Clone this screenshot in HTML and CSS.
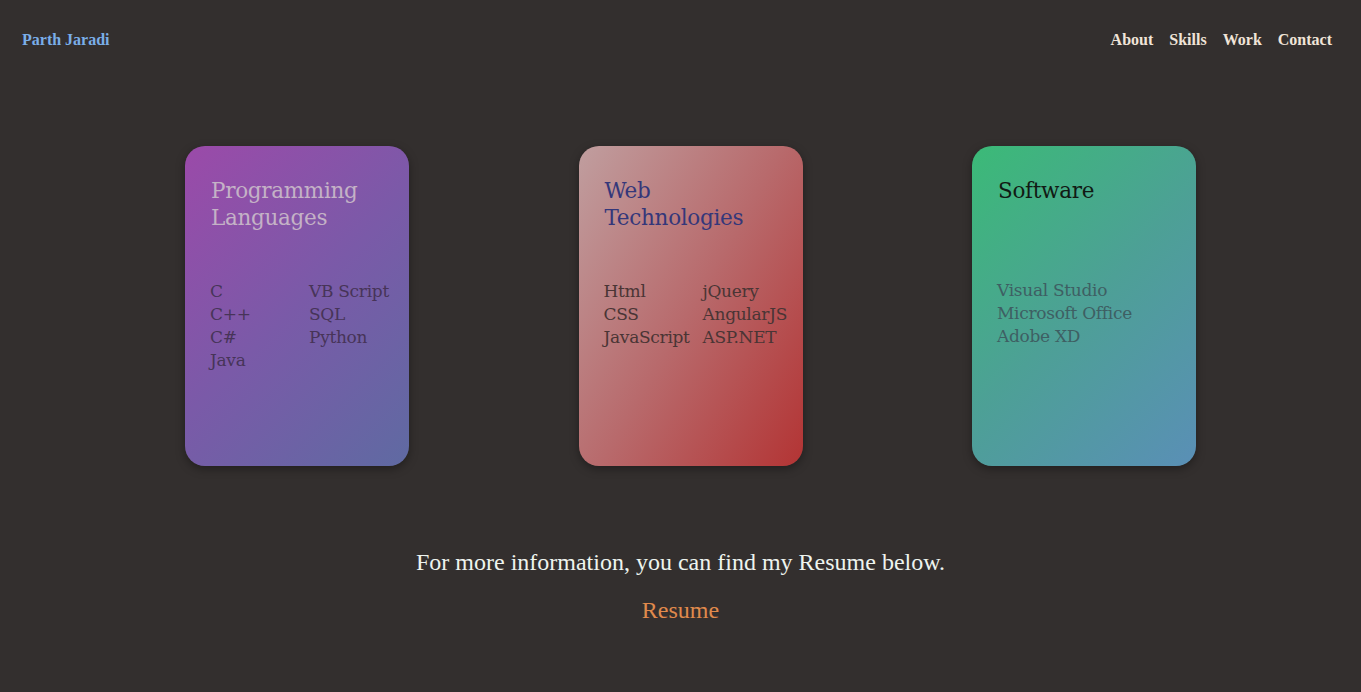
FILE: index.html
```html
<!DOCTYPE html>
<html>
<head>
<meta charset="utf-8">
<link rel="stylesheet" href="styles.css">
</head>
<body>
<header class="header">
  <a class="brand" href="#">Parth Jaradi</a>
  <nav class="nav">
    <a href="#">About</a>
    <a href="#">Skills</a>
    <a href="#">Work</a>
    <a href="#">Contact</a>
  </nav>
</header>
<main>
  <section class="cards">
    <div class="card card-prog">
      <h2 class="card-title">Programming<br>Languages</h2>
      <div class="list two-col">
        <ul>
          <li>C</li><li>C++</li><li>C#</li><li>Java</li>
        </ul>
        <ul>
          <li>VB Script</li><li>SQL</li><li>Python</li>
        </ul>
      </div>
    </div>
    <div class="card card-web">
      <h2 class="card-title">Web<br>Technologies</h2>
      <div class="list two-col">
        <ul>
          <li>Html</li><li>CSS</li><li>JavaScript</li>
        </ul>
        <ul>
          <li>jQuery</li><li>AngularJS</li><li>ASP.NET</li>
        </ul>
      </div>
    </div>
    <div class="card card-soft">
      <h2 class="card-title">Software</h2>
      <div class="list one-col">
        <ul>
          <li>Visual Studio</li><li>Microsoft Office</li><li>Adobe XD</li>
        </ul>
      </div>
    </div>
  </section>
  <section class="info">
    <p class="info-text">For more information, you can find my Resume below.</p>
    <a class="resume" href="#">Resume</a>
  </section>
</main>
</body>
</html>
```
FILE: styles.css
```css
html, body {
  margin: 0;
  padding: 0;
}
body {
  background: #332f2e;
  font-family: "Liberation Serif", "Times New Roman", serif;
  height: 692px;
  overflow: hidden;
}
a { text-decoration: none; }

.header {
  display: flex;
  justify-content: space-between;
  align-items: center;
  height: 80px;
  padding: 0 29px 0 22px;
}
.brand {
  color: #7aaee8;
  font-weight: bold;
  font-size: 16px;
}
.nav {
  display: flex;
  gap: 16px;
}
.nav a {
  color: #f0e4d8;
  font-weight: bold;
  font-size: 16px;
}

.cards {
  display: flex;
  justify-content: space-between;
  padding: 66px 165px 0 185px;
}
.card {
  width: 224px;
  height: 320px;
  border-radius: 20px;
  box-sizing: border-box;
  padding: 31px 0 0 26px;
  box-shadow: 0 3px 10px rgba(0,0,0,0.35);
  font-family: "DejaVu Serif", Georgia, serif;
}
.card-title {
  margin: 0;
  font-weight: normal;
  font-size: 21.5px;
  line-height: 27px;
  letter-spacing: -0.3px;
}
.list {
  display: flex;
  margin-top: 49px;
  margin-left: -1px;
}
.list ul {
  list-style: none;
  margin: 0;
  padding: 0;
  width: 99px;
  flex-shrink: 0;
}
.list li {
  font-size: 17px;
  line-height: 23px;
  letter-spacing: -0.3px;
  white-space: nowrap;
}
.one-col { margin-top: 75px; }
.one-col ul { width: auto; }

.card-prog {
  background: linear-gradient(135deg, #9b4aa9 0%, #7a5aa8 50%, #5f6aa2 100%);
}
.card-prog .card-title { color: #c4b2c6; }
.card-prog li { color: #473458; }

.card-web {
  background: linear-gradient(120deg, #c09e9f 0%, #b86a6c 50%, #b33434 100%);
}
.card-web .card-title { color: #34377a; }
.card-web li { color: #4a3535; }

.card-soft {
  background: linear-gradient(135deg, #3bba77 0%, #4da096 50%, #5a8fb6 100%);
}
.card-soft .card-title { color: #111a14; }
.card-soft li { color: #3e5f63; }

.info {
  display: flex;
  flex-direction: column;
  align-items: center;
  padding-top: 82px;
}
.info-text {
  margin: 0;
  color: #eef4ee;
  font-size: 24px;
  line-height: 28px;
}
.resume {
  margin-top: 20px;
  color: #e08a4c;
  font-size: 24px;
  line-height: 28px;
}
```
